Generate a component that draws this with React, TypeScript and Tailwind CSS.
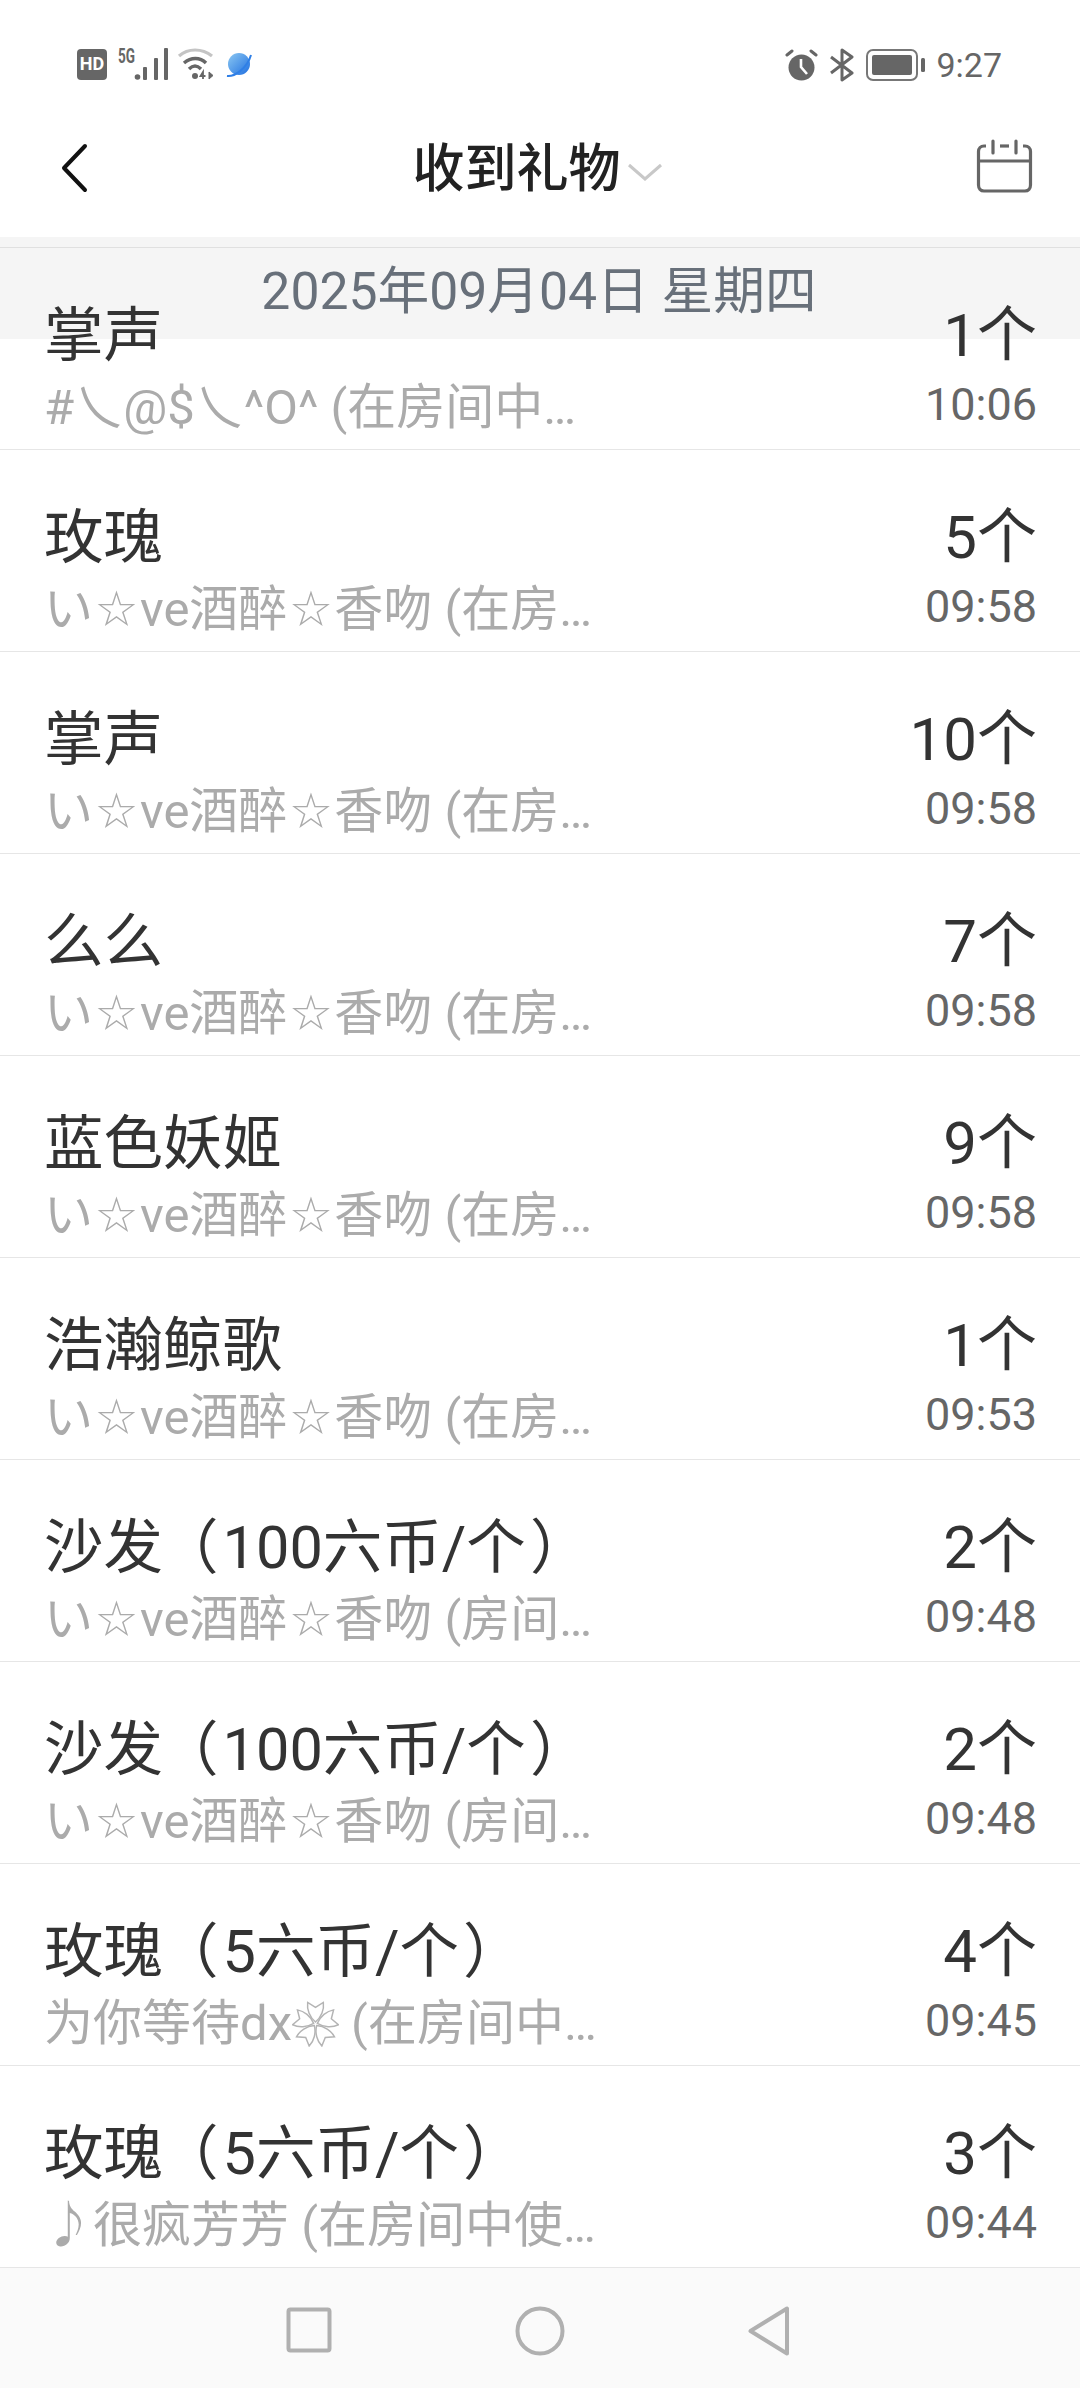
const rows = [
  { name: "掌声", sub: "#乀@$乀^O^ (在房间中…", count: "1个", time: "10:06" },
  { name: "玫瑰", sub: "い☆ve酒醉☆香吻 (在房…", count: "5个", time: "09:58" },
  { name: "掌声", sub: "い☆ve酒醉☆香吻 (在房…", count: "10个", time: "09:58" },
  { name: "么么", sub: "い☆ve酒醉☆香吻 (在房…", count: "7个", time: "09:58" },
  { name: "蓝色妖姬", sub: "い☆ve酒醉☆香吻 (在房…", count: "9个", time: "09:58" },
  { name: "浩瀚鲸歌", sub: "い☆ve酒醉☆香吻 (在房…", count: "1个", time: "09:53" },
  { name: "沙发（100六币/个）", sub: "い☆ve酒醉☆香吻 (房间…", count: "2个", time: "09:48" },
  { name: "沙发（100六币/个）", sub: "い☆ve酒醉☆香吻 (房间…", count: "2个", time: "09:48" },
  { name: "玫瑰（5六币/个）", sub: "为你等待dx❁ (在房间中…", count: "4个", time: "09:45" },
  { name: "玫瑰（5六币/个）", sub: "♪很疯芳芳 (在房间中使…", count: "3个", time: "09:44" },
];

function Name({ text }: { text: string }) {
  return (
    <>
      {text.split(/([（）])/).map((part, i) => {
        if (part === "（") return <span key={i} className="mr-[4px] ml-[-4px]">{part}</span>;
        if (part === "）") return <span key={i} className="ml-[4px]">{part}</span>;
        return <span key={i}>{part}</span>;
      })}
    </>
  );
}

function Flower() {
  return (
    <svg width="47" height="48" viewBox="0 0 48 48" className="inline-block align-[-7px]" aria-label="❁">
      {[0, 72, 144, 216, 288].map((deg) => (
        <path
          key={deg}
          transform={`rotate(${deg} 24 25)`}
          d="M24 23C18 18 15 10 16 3L24 8L32 3C33 10 30 18 24 23Z"
          fill="none"
          stroke="#b4b4b4"
          strokeWidth="1.5"
        />
      ))}
    </svg>
  );
}

function Sub({ text }: { text: string }) {
  return (
    <>
      {text.split(/([☆♪❁])/).map((part, i) => {
        if (part === "☆") return <span key={i} className="mx-[1.5px]">{part}</span>;
        if (part === "♪")
          return (
            <span key={i} className="font-['Noto_Sans_CJK_SC'] leading-none">
              {part}
            </span>
          );
        if (part === "❁") return <Flower key={i} />;
        return <span key={i}>{part}</span>;
      })}
    </>
  );
}

function Row({ name, sub, count, time }: (typeof rows)[number]) {
  return (
    <div className="relative flex h-[202px] shrink-0 items-start justify-between border-b border-[#e6e6e6] pt-[51px] pr-[43px] pl-[44px]">
      <div className="flex min-w-0 flex-col">
        <div className="h-[74px] text-[59.5px] leading-[74px] whitespace-nowrap text-[#333333]">
          <Name text={name} />
        </div>
        <div className="-mt-[1px] h-[72px] text-[49px] leading-[72px] whitespace-nowrap text-[#ababab]">
          <Sub text={sub} />
        </div>
      </div>
      <div className="flex flex-col items-end">
        <div className="h-[74px] text-[60px] leading-[74px] whitespace-nowrap text-[#333333]">{count}</div>
        <div className="-mt-[4px] h-[72px] text-[45px] leading-[72px] whitespace-nowrap text-[#666666]">{time}</div>
      </div>
    </div>
  );
}

export default function App() {
  return (
    <div
      className="flex h-[2388px] w-[1080px] flex-col overflow-hidden bg-white"
      style={{ fontFamily: 'Roboto, "DejaVu Sans", "Noto Sans CJK SC", sans-serif' }}
    >
      {/* status bar */}
      <div className="flex h-[110px] shrink-0 items-start justify-between pt-[48px] pr-[78px] pl-[77px]">
        <div className="flex items-center">
          <div className="flex h-[31px] w-[30px] items-center justify-center rounded-[4px] bg-[#666666] text-[18px] leading-none font-bold text-white">
            HD
          </div>
          <svg width="50" height="32" viewBox="0 0 50 32" className="ml-[11px] overflow-visible">
            <text x="0" y="15" fontSize="20" fontWeight="700" fill="#666" fontFamily="Roboto" textLength="17" lengthAdjust="spacingAndGlyphs">5G</text>
            <circle cx="19.5" cy="29" r="2.8" fill="#666" />
            <rect x="25" y="19" width="4" height="13" rx="1" fill="#666" />
            <rect x="36" y="10" width="4" height="22" rx="1" fill="#666" />
            <rect x="46" y="0" width="4" height="32" rx="1" fill="#666" />
          </svg>
          <svg width="38" height="32" viewBox="0 0 38 32" className="ml-[9px]">
            <path d="M2 8C11 0 25 0 35 8" fill="none" stroke="#c4c4c4" strokeWidth="3.2" />
            <path d="M7 15C14 9 23 9 29 15" fill="none" stroke="#666" strokeWidth="3.4" />
            <path d="M12 21C16 17 20 17 24 21" fill="none" stroke="#666" strokeWidth="3.4" />
            <circle cx="18" cy="28" r="3" fill="#666" />
            <path d="M26 31V24L23.5 28H28.5" fill="none" stroke="#666" strokeWidth="1.8" />
            <path d="M32 24V31L36 27.5Z" fill="#666" stroke="#666" strokeWidth="1" />
          </svg>
          <svg width="26" height="28" viewBox="0 0 26 28" className="ml-[11px]">
            <defs>
              <linearGradient id="globe" x1="0" y1="0" x2="1" y2="1">
                <stop offset="0" stopColor="#8cc8f2" />
                <stop offset="1" stopColor="#1f6fe0" />
              </linearGradient>
            </defs>
            <circle cx="13" cy="14" r="11" fill="url(#globe)" />
            <path d="M1 26C8 27 21 19 25 5" fill="none" stroke="#2f7fe6" strokeWidth="2" />
          </svg>
        </div>
        <div className="flex items-center">
          <svg width="33" height="32" viewBox="0 0 33 32">
            <circle cx="16.5" cy="18.5" r="13" fill="#666" />
            <path d="M16 10V18L22 25" fill="none" stroke="#fff" strokeWidth="2.6" />
            <path d="M2 6L7 2M31 6L26 2" stroke="#666" strokeWidth="3" strokeLinecap="round" />
          </svg>
          <svg width="26" height="34" viewBox="0 0 26 34" className="ml-[11px]">
            <path d="M2 9L23 25L13 32V2L23 9L2 25" fill="none" stroke="#666" strokeWidth="3" strokeLinejoin="round" />
          </svg>
          <svg width="60" height="32" viewBox="0 0 60 32" className="ml-[11px]">
            <rect x="1" y="1" width="50" height="30" rx="6" fill="none" stroke="#777" strokeWidth="2" />
            <rect x="6" y="6" width="40" height="20" rx="2" fill="#666" />
            <rect x="55" y="9" width="4" height="14" rx="1.5" fill="#666" />
          </svg>
          <span className="ml-[10px] text-[34px] leading-[32px] text-[#666666]">9:27</span>
        </div>
      </div>

      {/* title bar */}
      <div className="relative flex h-[127px] shrink-0 items-start justify-center pt-[33px]">
        <svg width="30" height="50" viewBox="0 0 30 50" className="absolute top-[33px] left-[60px]">
          <path d="M25 3L4 25L25 47" fill="none" stroke="#111" strokeWidth="4" strokeLinecap="round" strokeLinejoin="round" />
        </svg>
        <div className="ml-[-5px] flex items-center">
          <span className="text-[52px] leading-[54px] font-medium text-[#222222]">收到礼物</span>
          <svg width="36" height="20" viewBox="0 0 36 20" className="mt-[4px] ml-[6px]">
            <path d="M2 3L18 17L34 3" fill="none" stroke="#c8c8c8" strokeWidth="3" />
          </svg>
        </div>
        <svg width="57" height="55" viewBox="0 0 57 55" className="absolute top-[29px] right-[47px]">
          <path
            d="M10 7H8C4.7 7 2.5 9.2 2.5 12.5V46C2.5 49.5 4.7 52 8 52H49C52.3 52 54.5 49.5 54.5 46V12.5C54.5 9.2 52.3 7 49 7H47"
            fill="none"
            stroke="#666"
            strokeWidth="3.2"
          />
          <path d="M2.5 22H54.5" stroke="#666" strokeWidth="3.2" />
          <path d="M17 2V14M40 2V14" stroke="#666" strokeWidth="3.2" strokeLinecap="round" />
          <path d="M24 7H33" stroke="#666" strokeWidth="3.2" />
        </svg>
      </div>

      <div className="h-[10px] shrink-0 bg-[#f5f5f5]" />

      {/* list */}
      <div className="relative flex flex-1 flex-col overflow-hidden border-t border-[#e0e0e0]">
        <div className="absolute top-0 right-0 left-0 flex h-[91px] items-start justify-center bg-[#f5f5f5] pt-[14px]">
          <span className="ml-[-2px] text-[51.7px] leading-[60px] whitespace-pre text-[#68707a]">2025年09月04日 星期四</span>
        </div>
        {rows.map((r, i) => (
          <Row key={i} {...r} />
        ))}
      </div>

      {/* nav bar */}
      <div className="flex h-[120px] shrink-0 items-start bg-[#fafafa] pt-[38px]">
        <svg width="46" height="46" viewBox="0 0 46 46" className="mt-[1px] ml-[286px]">
          <rect x="2.5" y="2.5" width="41" height="41" rx="2" fill="none" stroke="#b0b0b0" strokeWidth="4" />
        </svg>
        <svg width="50" height="50" viewBox="0 0 50 50" className="ml-[183px]">
          <circle cx="25" cy="25" r="22.5" fill="none" stroke="#b0b0b0" strokeWidth="4" />
        </svg>
        <svg width="42" height="50" viewBox="0 0 42 50" className="ml-[183px]">
          <path d="M39 2.5V47.5L2.5 25Z" fill="none" stroke="#b0b0b0" strokeWidth="4" strokeLinejoin="round" />
        </svg>
      </div>
    </div>
  );
}
